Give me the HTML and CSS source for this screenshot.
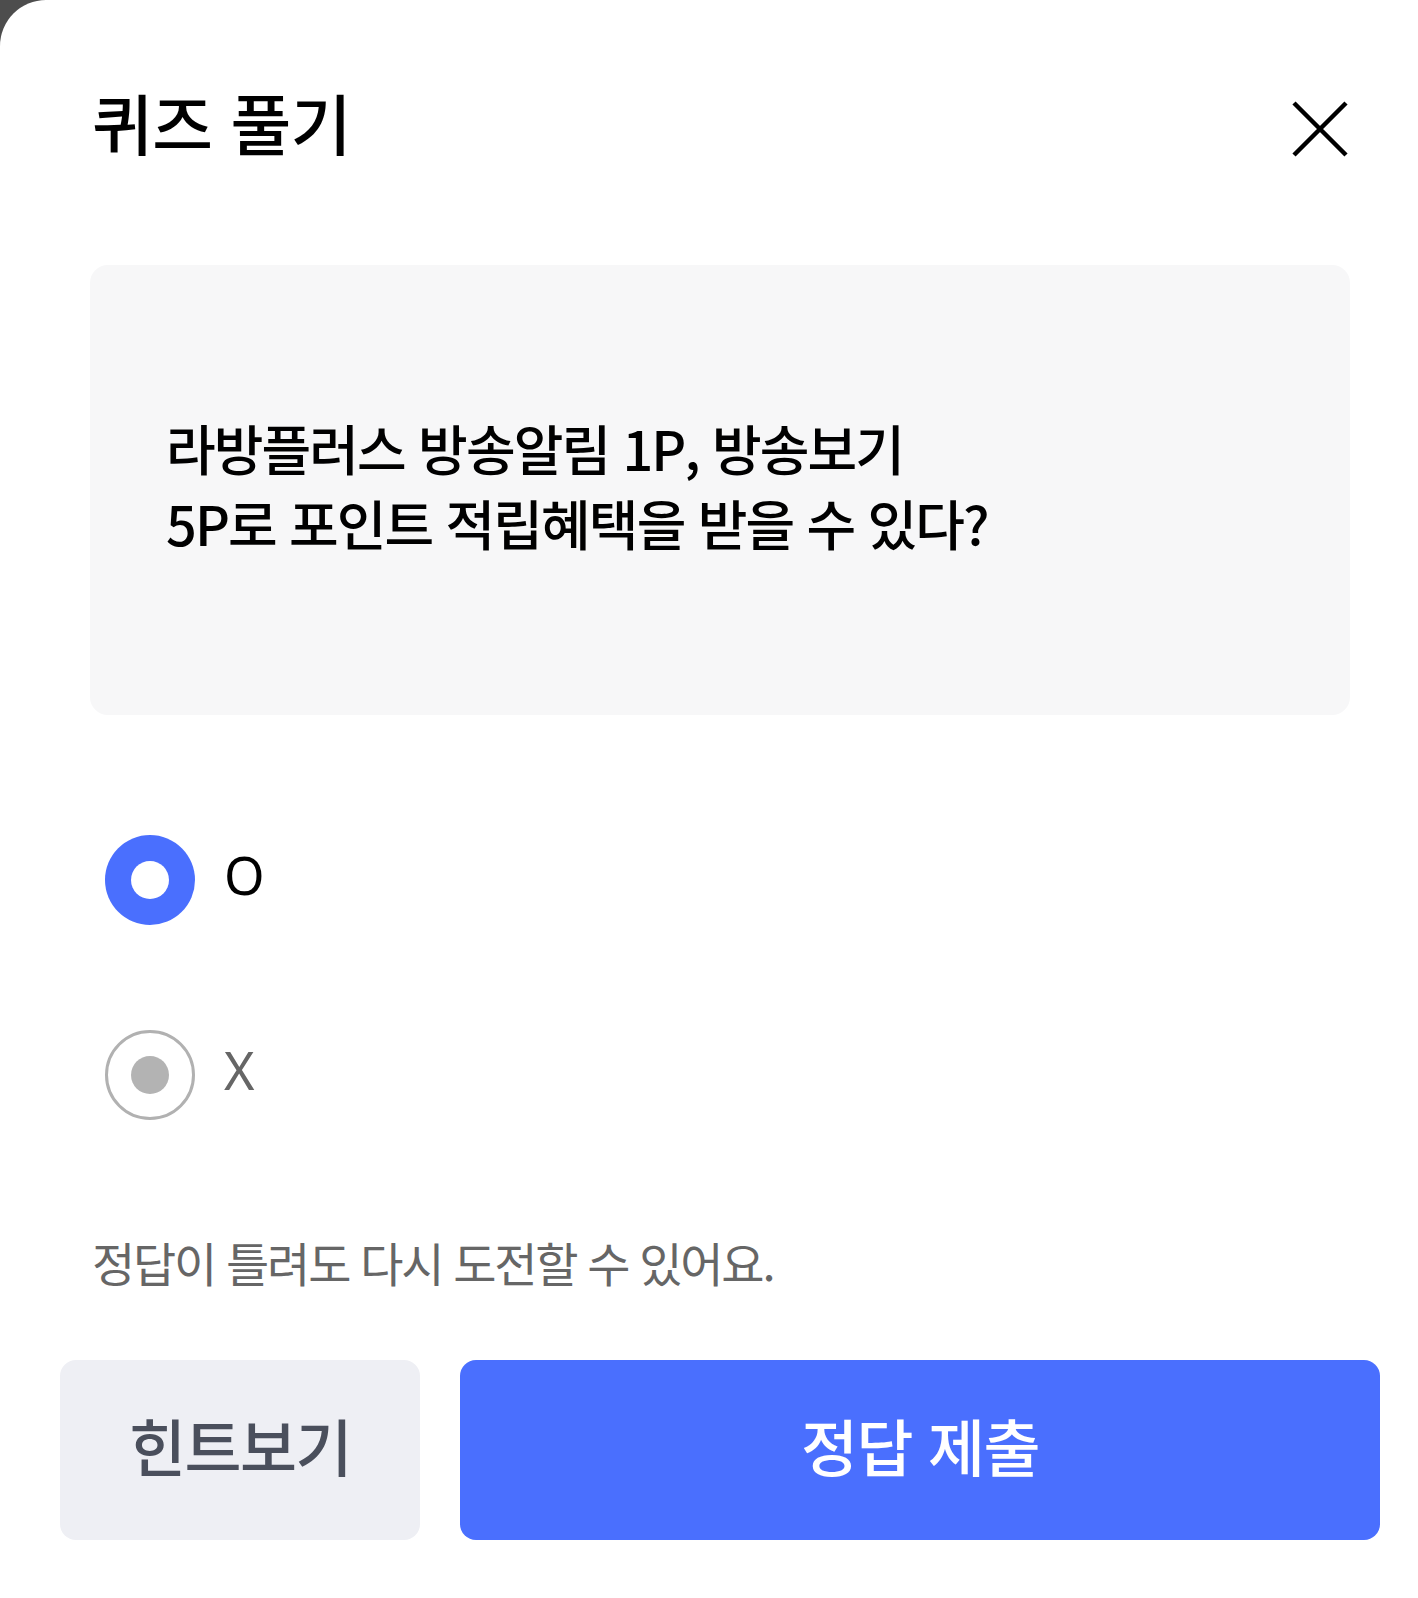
FILE: index.html
```html
<!DOCTYPE html>
<html lang="ko">
<head>
    <meta charset="UTF-8" />
    <meta name="viewport" content="width=device-width, initial-scale=1" />
    <title>퀴즈 풀기</title>
    <link rel="stylesheet" href="styles.css">
</head>
<body>

<div class="sheet">
    <div class="inner">
        <header class="quiz-header">
            <h1 class="quiz-title">퀴즈 풀기</h1>
            <button class="close-btn" aria-label="닫기">
                <svg width="56" height="56" viewBox="0 0 56 56">
                    <path d="M2 2 L54 54 M54 2 L2 54" stroke="#000" stroke-width="4.5" fill="none" />
                </svg>
            </button>
        </header>

        <div class="question-box">
            <p class="question-text">라방플러스 방송알림 1P, 방송보기<br>5P로 포인트 적립혜택을 받을 수 있다?</p>
        </div>

        <div class="options">
            <label class="option selected">
                <span class="radio"></span>
                <span class="option-label">O</span>
            </label>
            <label class="option">
                <span class="radio"></span>
                <span class="option-label">X</span>
            </label>
        </div>

        <p class="notice">정답이 틀려도 다시 도전할 수 있어요.</p>
    </div>

    <div class="actions">
        <button class="btn btn-hint">힌트보기</button>
        <button class="btn btn-submit">정답 제출</button>
    </div>
</div>

</body>
</html>
```

FILE: styles.css
```css
body {
    margin: 0;
    background-color: #4d4d4d;
    font-family: "Noto Sans CJK KR", "Noto Sans", sans-serif;
    color: #000;
}
.sheet {
    background-color: #fff;
    border-top-left-radius: 46px;
    min-height: 1598px;
    box-sizing: border-box;
    padding: 0 38px 0 60px;
}
.inner {
    padding: 0 30px;
}
/* Cabecera */
.quiz-header {
    display: flex;
    justify-content: space-between;
    align-items: center;
    padding-top: 64px;
    height: 124px;
}
.quiz-title {
    margin: -10px 0 0 2px;
    font-size: 66px;
    font-weight: 500;
    letter-spacing: -0.5px;
}
.close-btn {
    background: none;
    border: 0;
    padding: 0;
    margin: 6px 2px 0 0;
    display: flex;
    cursor: pointer;
}
/* Caja de la pregunta */
.question-box {
    margin-top: 77px;
    height: 450px;
    background-color: #f7f7f8;
    border-radius: 18px;
    display: flex;
    align-items: center;
    padding: 0 76px;
}
.question-text {
    margin: -10px 0 0;
    font-size: 54px;
    font-weight: 500;
    line-height: 75px;
    letter-spacing: -1.9px;
}
/* Opciones O / X */
.options {
    margin-top: 67px;
}
.option {
    display: flex;
    align-items: center;
    height: 195px;
    padding-left: 15px;
}
.radio {
    width: 90px;
    height: 90px;
    box-sizing: border-box;
    border-radius: 50%;
    border: 3px solid #b1b1b1;
    display: flex;
    align-items: center;
    justify-content: center;
}
.radio::after {
    content: "";
    width: 38px;
    height: 38px;
    border-radius: 50%;
    background-color: #b3b3b3;
}
.option.selected .radio {
    border: 0;
    background-color: #4a6ffe;
}
.option.selected .radio::after {
    background-color: #fff;
}
.option-label {
    margin: -10px 0 0 29px;
    font-family: "Noto Sans", sans-serif;
    font-size: 52px;
    color: #666;
}
.option.selected .option-label {
    color: #000;
}
.notice {
    margin: 55px 0 0 2px;
    font-size: 47px;
    color: #666;
    letter-spacing: -2.2px;
}
/* Botones */
.actions {
    display: flex;
    gap: 40px;
    margin-top: 64px;
}
.btn {
    height: 180px;
    border: 0;
    border-radius: 16px;
    padding: 0 0 10px;
    font-family: inherit;
    font-size: 62px;
    font-weight: 500;
    letter-spacing: -1.5px;
    cursor: pointer;
}
.btn-hint {
    width: 360px;
    background-color: #eeeff4;
    color: #4a4f5c;
}
.btn-submit {
    flex: 1;
    background-color: #4a6ffe;
    color: #fff;
}
```
